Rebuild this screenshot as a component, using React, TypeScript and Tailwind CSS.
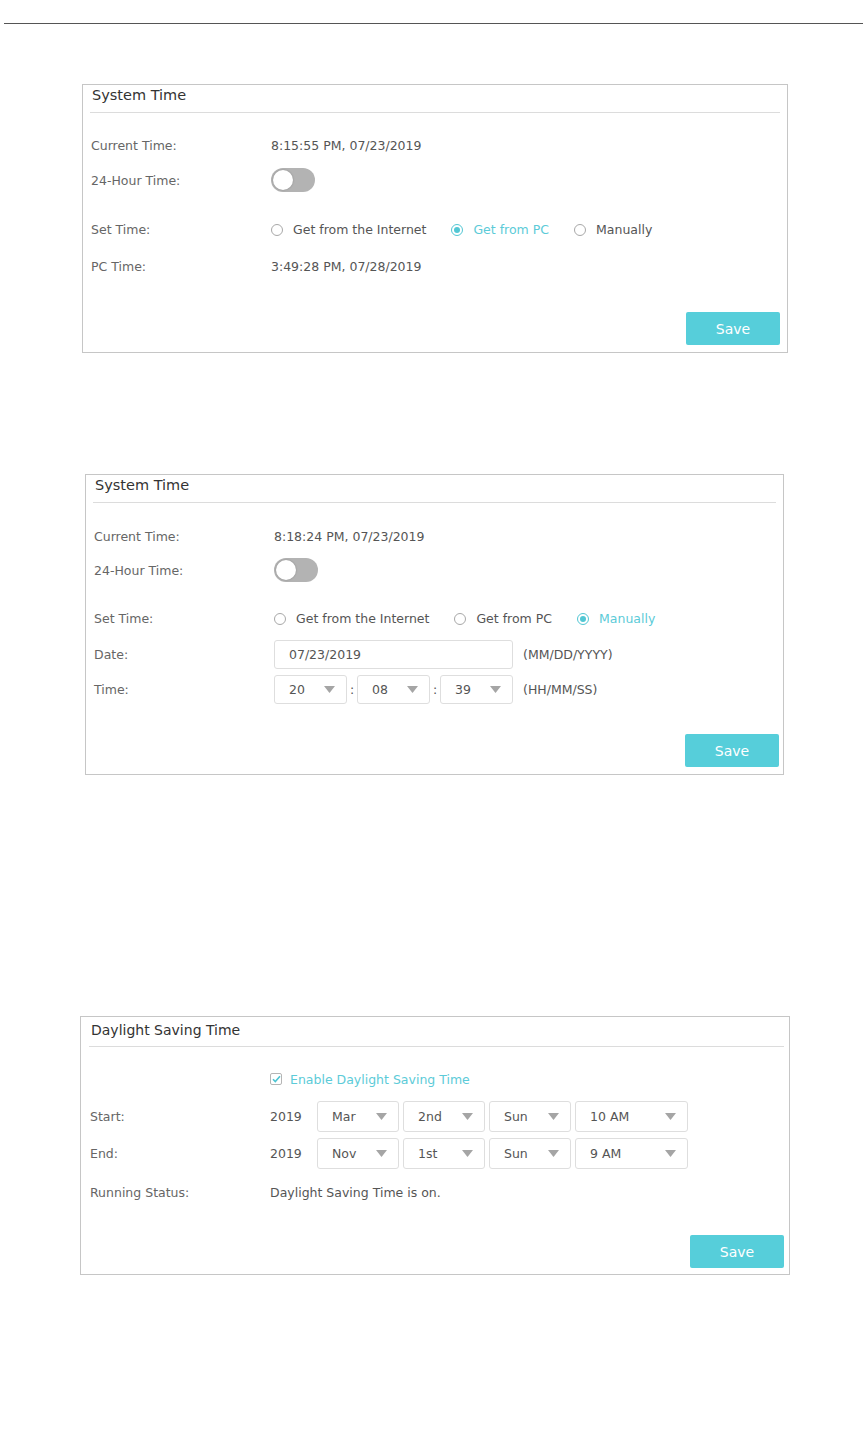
import type { ReactNode } from 'react'

const font = { fontFamily: '"DejaVu Sans", Verdana, sans-serif' }

function Panel({ title, titleSize, titleH = 'h-[27px]', pad = 'px-[7px]', saveInset = 'mr-0', className, children }: { title: string; titleSize: string; titleH?: string; pad?: string; saveInset?: string; className: string; children: ReactNode }) {
  return (
    <div className={`border border-[#c6c6c6] bg-white ${pad} ${className}`}>
      <div className={`${titleH} flex items-end pb-[5px] pl-[2px] text-[#333] ${titleSize}`}>{title}</div>
      <div className="h-px bg-[#dcdcdc]" />
      {children}
    </div>
  )
}

function Row({ label, className = '', plain = true, children }: { label: string; className?: string; plain?: boolean; children?: ReactNode }) {
  return (
    <div className={`flex items-center ${className}`}>
      <div className="w-[181px] pl-[1px] pt-[2px] shrink-0 text-[#666]">{label}</div>
      <div className={`flex items-center text-[#555] ${plain ? 'pt-[2px]' : ''}`}>{children}</div>
    </div>
  )
}

function Toggle() {
  return (
    <div className="w-[44px] h-[24px] rounded-full bg-[#b3b3b3] flex items-center pl-[2px]">
      <div className="w-[20px] h-[20px] rounded-full bg-white shadow-[0_0_2px_rgba(0,0,0,0.25)]" />
    </div>
  )
}

function Radio({ label, checked }: { label: string; checked?: boolean }) {
  return (
    <div className="flex items-center mr-[25px]">
      <div className={`w-[12px] h-[12px] rounded-full border flex items-center justify-center ${checked ? 'border-[#52c7d4]' : 'border-[#a8a8a8]'}`}>
        {checked && <div className="w-[6px] h-[6px] rounded-full bg-[#52c7d4]" />}
      </div>
      <span className={`ml-[10px] ${checked ? 'text-[#5ccbd8]' : 'text-[#555]'}`}>{label}</span>
    </div>
  )
}

function Select({ value, width, h = 'h-[30px]' }: { value: string; width: string; h?: string }) {
  return (
    <div className={`${width} ${h} rounded-[3px] border border-[#dedede] bg-white flex items-center justify-between pl-[14px] pr-[11px] text-[#555]`}>
      <span className="pt-[2px]">{value}</span>
      <svg width="11" height="7" viewBox="0 0 11 7">
        <path d="M0 0h11L5.5 7z" fill="#a5a5a5" />
      </svg>
    </div>
  )
}

function SaveButton({ inset = '' }: { inset?: string }) {
  return (
    <div className={`flex justify-end ${inset}`}>
      <div className="w-[94px] h-[33px] rounded-[2px] bg-[#56ceda] text-white text-[14px] flex items-center justify-center pt-[1px]">Save</div>
    </div>
  )
}

export default function App() {
  return (
    <div className="w-[867px] h-[1431px] bg-white text-[12.5px] relative" style={font}>
      <div className="pt-[23px] px-[4px]">
        <div className="h-px bg-[#555]" />
      </div>

      {/* get time from PC */}
      <Panel title="System Time" titleSize="text-[14.5px]" className="ml-[82px] mt-[60px] w-[706px] h-[269px]">
        <Row label="Current Time:" className="h-[24px] mt-[20px]">8:15:55 PM, 07/23/2019</Row>
        <Row label="24-Hour Time:" plain={false} className="h-[24px] mt-[11px]"><Toggle /></Row>
        <Row label="Set Time:" className="h-[24px] mt-[25px]">
          <Radio label="Get from the Internet" />
          <Radio label="Get from PC" checked />
          <Radio label="Manually" />
        </Row>
        <Row label="PC Time:" className="h-[24px] mt-[13px]">3:49:28 PM, 07/28/2019</Row>
        <div className="mt-[34px]"><SaveButton /></div>
      </Panel>

      {/* manual time */}
      <Panel title="System Time" titleSize="text-[14.5px]" className="ml-[85px] mt-[121px] w-[699px] h-[301px]">
        <Row label="Current Time:" className="h-[24px] mt-[21px]">8:18:24 PM, 07/23/2019</Row>
        <Row label="24-Hour Time:" plain={false} className="h-[24px] mt-[10px]"><Toggle /></Row>
        <Row label="Set Time:" className="h-[24px] mt-[24px]">
          <Radio label="Get from the Internet" />
          <Radio label="Get from PC" />
          <Radio label="Manually" checked />
        </Row>
        <Row label="Date:" plain={false} className="h-[29px] mt-[10px]">
          <div className="w-[239px] h-[29px] rounded-[3px] border border-[#dedede] flex items-center pl-[14px] pt-[2px]">07/23/2019</div>
          <span className="ml-[10px] pt-[2px]">(MM/DD/YYYY)</span>
        </Row>
        <Row label="Time:" plain={false} className="h-[29px] mt-[6px]">
          <Select value="20" width="w-[73px]" h="h-[29px]" />
          <span className="w-[10px] text-center pt-[2px]">:</span>
          <Select value="08" width="w-[73px]" h="h-[29px]" />
          <span className="w-[10px] text-center pt-[2px]">:</span>
          <Select value="39" width="w-[73px]" h="h-[29px]" />
          <span className="ml-[10px] pt-[2px]">(HH/MM/SS)</span>
        </Row>
        <div className="mt-[30px]"><SaveButton inset="-mr-[3px]" /></div>
      </Panel>

      {/* daylight saving */}
      <Panel title="Daylight Saving Time" titleSize="text-[14px]" titleH="h-[29px]" pad="pl-[8px] pr-[5px]" className="ml-[80px] mt-[241px] w-[710px] h-[259px]">
        <Row label="" plain={false} className="h-[24px] mt-[20px]">
          <div className="w-[12px] h-[12px] rounded-[2px] border border-[#b5b5b5] flex items-center justify-center">
            <svg width="9" height="8" viewBox="0 0 9 8">
              <path d="M1 4.2l2.3 2.3L8 1.2" fill="none" stroke="#4cc4d2" strokeWidth="1.6" />
            </svg>
          </div>
          <span className="ml-[8px] pt-[2px] text-[#5ccbd8]">Enable Daylight Saving Time</span>
        </Row>
        <Row label="Start:" plain={false} className="h-[31px] mt-[10px]">
          <span className="w-[47px] pt-[2px]">2019</span>
          <div className="flex gap-[4px]">
            <Select value="Mar" width="w-[82px]" h="h-[31px]" />
            <Select value="2nd" width="w-[82px]" h="h-[31px]" />
            <Select value="Sun" width="w-[82px]" h="h-[31px]" />
            <Select value="10 AM" width="w-[113px]" h="h-[31px]" />
          </div>
        </Row>
        <Row label="End:" plain={false} className="h-[31px] mt-[6px]">
          <span className="w-[47px] pt-[2px]">2019</span>
          <div className="flex gap-[4px]">
            <Select value="Nov" width="w-[82px]" h="h-[31px]" />
            <Select value="1st" width="w-[82px]" h="h-[31px]" />
            <Select value="Sun" width="w-[82px]" h="h-[31px]" />
            <Select value="9 AM" width="w-[113px]" h="h-[31px]" />
          </div>
        </Row>
        <Row label="Running Status:" className="h-[24px] mt-[11px]">Daylight Saving Time is on.</Row>
        <div className="mt-[31px]"><SaveButton /></div>
      </Panel>
    </div>
  )
}
